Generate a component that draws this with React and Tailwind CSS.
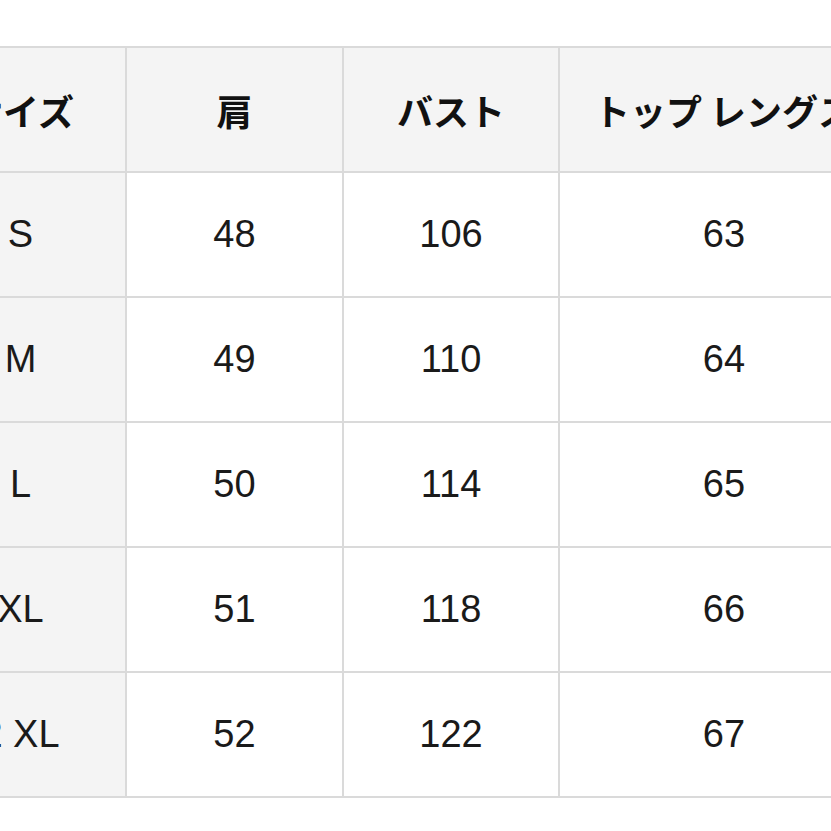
import React from 'react';

const rows = [
  ['S', '48', '106', '63'],
  ['M', '49', '110', '64'],
  ['L', '50', '114', '65'],
  ['XL', '51', '118', '66'],
  ['2 XL', '52', '122', '67'],
];

const cols = ['サイズ', '肩', 'バスト', 'トップ レングス'];

export default function App() {
  return (
    <div className="w-[831px] h-[831px] overflow-hidden bg-white">
      <div className="pt-[46px] ml-[-84px]">
        <div
          className="grid grid-cols-[211px_217px_216px_328px] w-[974px] border-t-2 border-[#dadada]"
          style={{ fontFamily: '"Liberation Sans", "Noto Sans CJK JP", sans-serif' }}
        >
          {cols.map((c, i) => (
            <div
              key={c}
              className={`h-[125px] flex items-center justify-center bg-[#f4f4f4] border-b-2 border-[#dadada] text-[36px] font-bold text-[#111] ${i < 3 ? 'border-r-2' : ''}`}
              style={{ fontFamily: '"Noto Sans CJK JP", sans-serif' }}
            >
              {c}
            </div>
          ))}
          {rows.map((r) =>
            r.map((v, i) => (
              <div
                key={r[0] + i}
                className={`h-[125px] flex items-center justify-center border-b-2 border-[#dadada] text-[38px] text-[#1a1a1a] ${i < 3 ? 'border-r-2' : ''} ${i === 0 ? 'bg-[#f4f4f4]' : 'bg-white'}`}
              >
                {v}
              </div>
            ))
          )}
        </div>
      </div>
    </div>
  );
}
